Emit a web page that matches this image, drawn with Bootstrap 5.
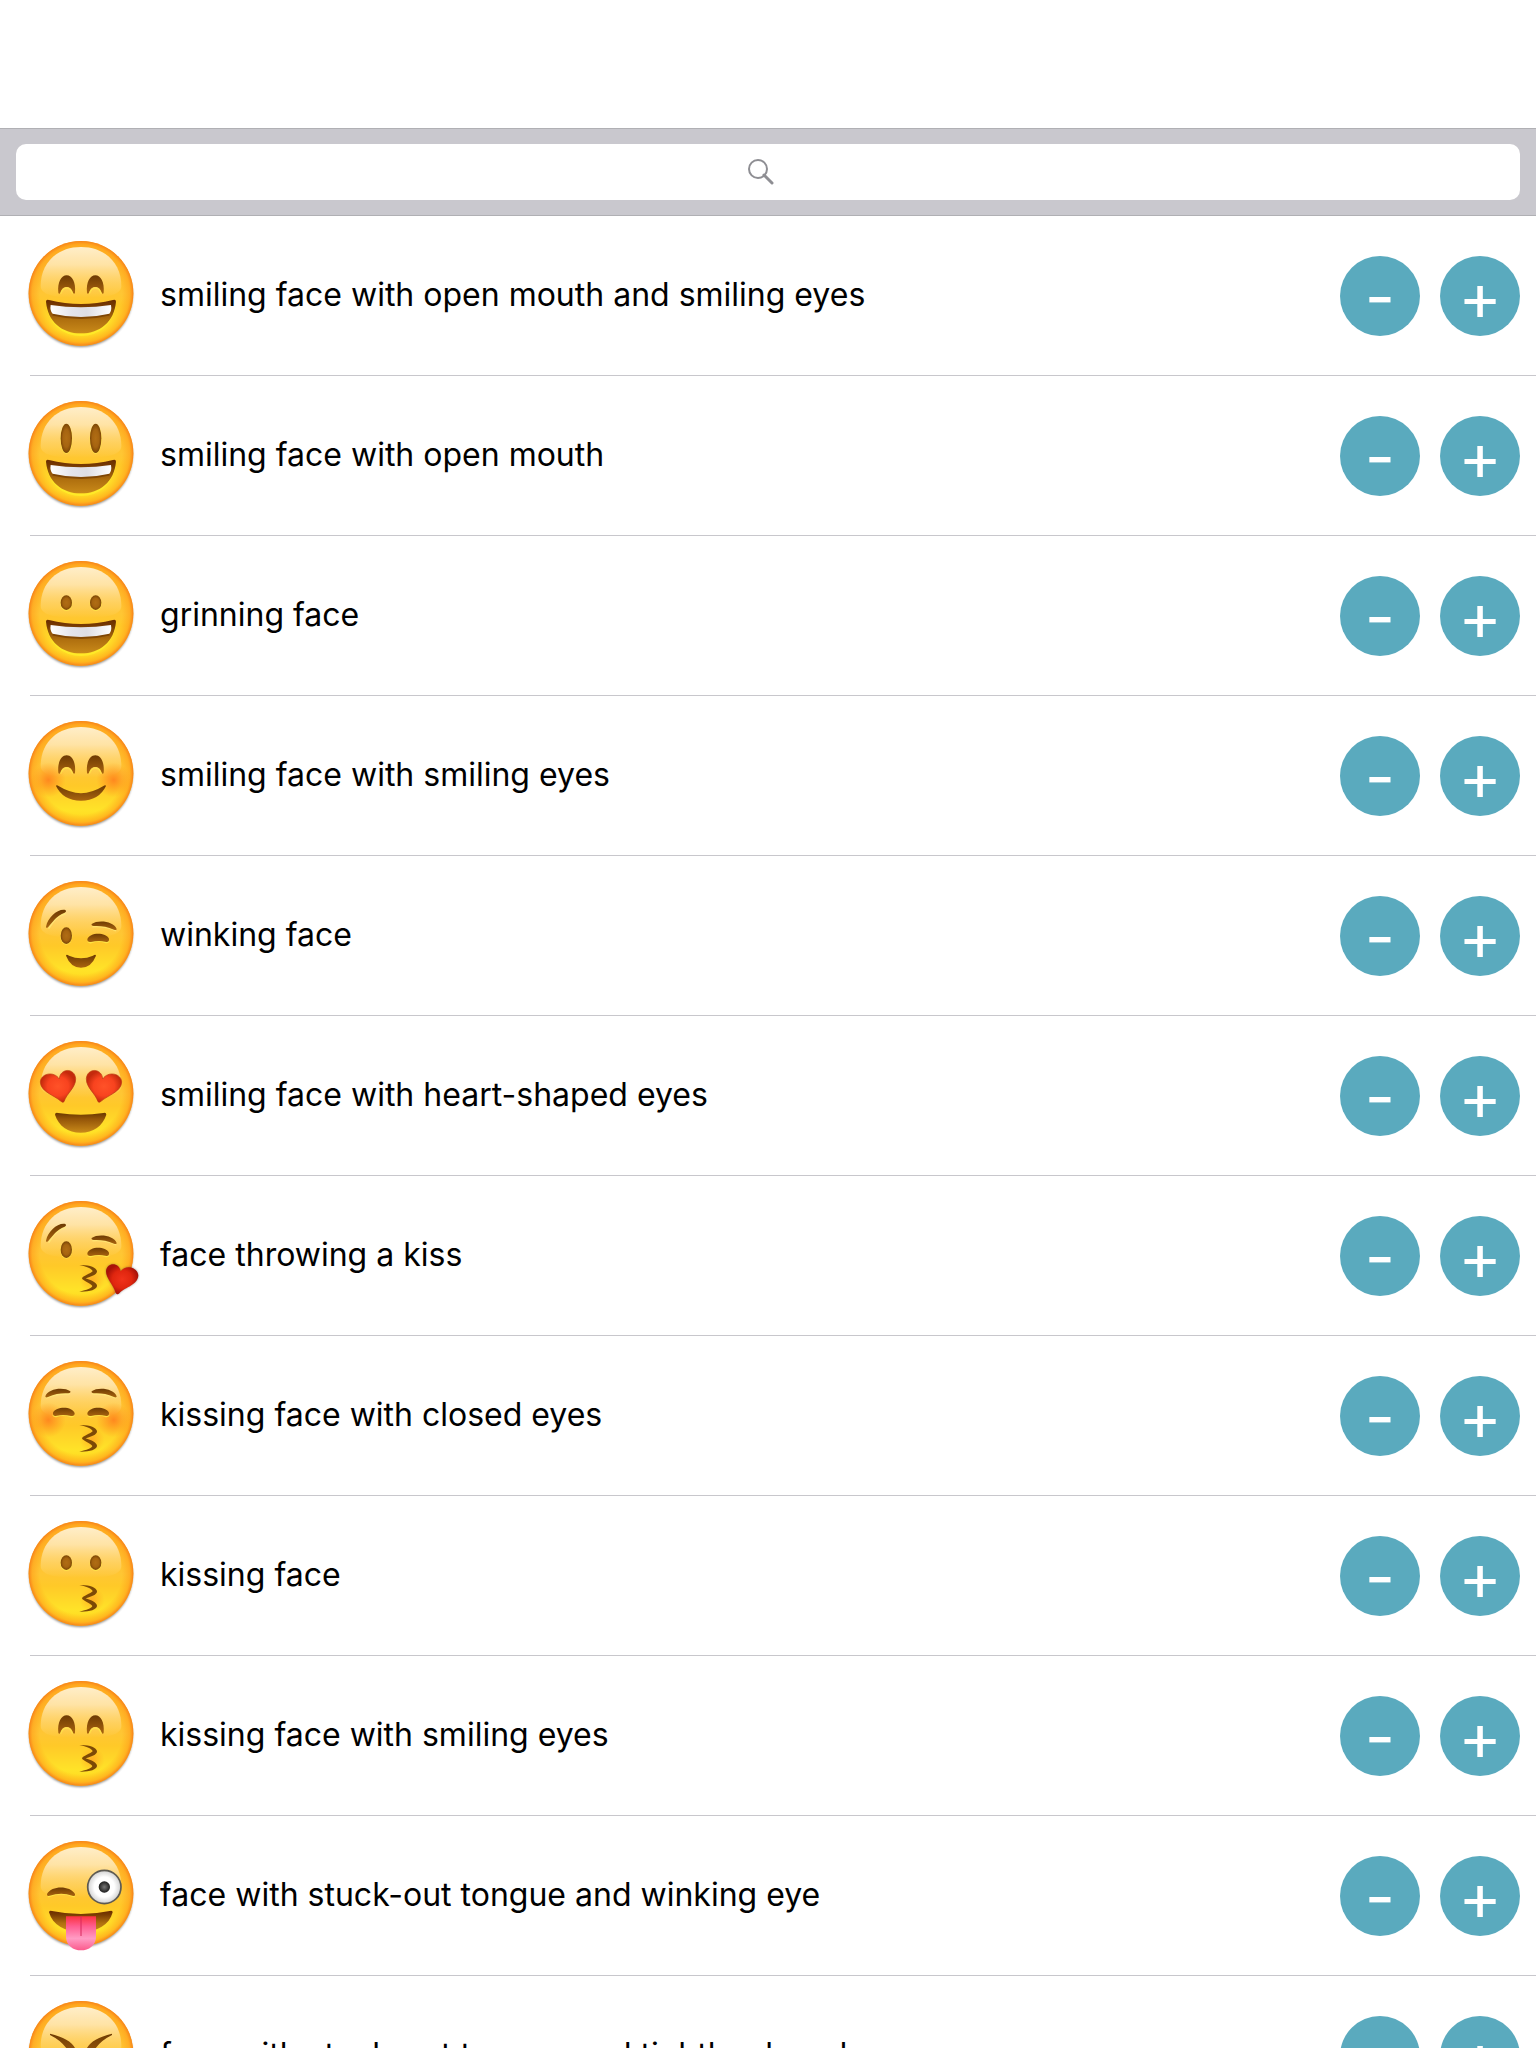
<!DOCTYPE html>
<html lang="en">
<head>
<meta charset="utf-8">
<meta name="viewport" content="width=device-width, initial-scale=1">
<title>Emoji list</title>
<link href="https://cdn.jsdelivr.net/npm/bootstrap@5.3.0/dist/css/bootstrap.min.css" rel="stylesheet">
<style>
  body { font-family: Inter, "Liberation Sans", sans-serif; color: #000; }
  .top-space { height: 128px; }
  .search-bar { background: #c9c8ce; border-top: 1px solid #b0b0b4; border-bottom: 1px solid #b0b0b4; padding: 15px 16px; }
  .search-bar .form-control { height: 56px; border: 0; border-radius: 10px; font-size: 28px; text-align: center; }
  .search-hint { padding-right: 14px; pointer-events: none; }
  .emoji-list { overflow-y: auto; scrollbar-width: none; }
  .emoji-list::-webkit-scrollbar { display: none; }
  .emoji-row { height: 160px; padding: 0 16px 0 20px; background: linear-gradient(#c8c7cc, #c8c7cc) 30px 100% / 100% 1px no-repeat; }
  .emoji-name { padding: 0 20px 2px; font-size: 32px; line-height: 40px; }
  .face { width: 120px; height: 120px; }
  .btn-pair { gap: 20px; }
  .round-btn { width: 80px; height: 80px; border: 0; background: #5aaabe; color: #fff; font-size: 66px; line-height: 80px; }
  .round-btn:hover, .round-btn:active { background: #4a99ad !important; color: #fff !important; }
</style>
<script src="https://cdn.jsdelivr.net/npm/bootstrap@5.3.0/dist/js/bootstrap.bundle.min.js"></script>
</head>
<body>

<!-- shared drawing parts for the faces -->
<svg width="0" height="0" class="position-absolute" aria-hidden="true">
  <defs>
    <linearGradient id="skin" x1="0" y1="0" x2="0" y2="1">
      <stop offset="0" stop-color="#ffb31f"/><stop offset=".5" stop-color="#ffc634"/><stop offset=".62" stop-color="#ffc928"/><stop offset=".85" stop-color="#ffe328"/><stop offset="1" stop-color="#ffd41c"/>
    </linearGradient>
    <radialGradient id="rim">
      <stop offset=".78" stop-color="#ffa41c" stop-opacity="0"/><stop offset=".93" stop-color="#ffa01c" stop-opacity=".6"/><stop offset="1" stop-color="#f7811a"/>
    </radialGradient>
    <linearGradient id="gloss" x1="0" y1="0" x2="0" y2="1">
      <stop offset="0" stop-color="#fff1d2" stop-opacity=".95"/><stop offset=".35" stop-color="#ffeabb" stop-opacity=".85"/><stop offset=".8" stop-color="#ffdc80" stop-opacity=".4"/><stop offset="1" stop-color="#ffd970" stop-opacity="0"/>
    </linearGradient>
    <linearGradient id="brown" x1="0" y1="0" x2="0" y2="1">
      <stop offset="0" stop-color="#6e3b03"/><stop offset="1" stop-color="#a9640f"/>
    </linearGradient>
    <radialGradient id="iris"><stop offset="0" stop-color="#b06d14"/><stop offset=".6" stop-color="#a66410"/><stop offset="1" stop-color="#7b4505"/></radialGradient>
    <linearGradient id="throat" x1="0" y1="0" x2="0" y2="1">
      <stop offset="0" stop-color="#6a2b00"/><stop offset=".2" stop-color="#7a3d02"/><stop offset=".6" stop-color="#b0700f"/><stop offset="1" stop-color="#c98a1a"/>
    </linearGradient>
    <linearGradient id="mouthful" x1="0" y1="0" x2="0" y2="1">
      <stop offset="0" stop-color="#6a3800"/><stop offset=".3" stop-color="#935408"/><stop offset="1" stop-color="#c98a1a"/>
    </linearGradient>
    <linearGradient id="teeth" x1="0" y1="0" x2="1" y2="0">
      <stop offset="0" stop-color="#fff"/><stop offset=".35" stop-color="#e4e4ea"/><stop offset=".6" stop-color="#dedee4"/><stop offset="1" stop-color="#fff"/>
    </linearGradient>
    <radialGradient id="blush"><stop offset="0" stop-color="#ff7d1c" stop-opacity=".85"/><stop offset="1" stop-color="#ff8d1c" stop-opacity="0"/></radialGradient>
    <radialGradient id="love"><stop offset="0" stop-color="#ff5228"/><stop offset=".6" stop-color="#f8431f"/><stop offset="1" stop-color="#c42a0c"/></radialGradient>
    <radialGradient id="love2"><stop offset="0" stop-color="#f0321a"/><stop offset=".6" stop-color="#e0260f"/><stop offset="1" stop-color="#a81208"/></radialGradient>
    <linearGradient id="tongue" x1="0" y1="0" x2="0" y2="1">
      <stop offset="0" stop-color="#fb3240"/><stop offset=".3" stop-color="#ff5f92"/><stop offset=".65" stop-color="#ff9cc4"/><stop offset="1" stop-color="#fb5a8c"/>
    </linearGradient>
    <radialGradient id="eyeball"><stop offset=".6" stop-color="#fff"/><stop offset=".9" stop-color="#dcdcdc"/><stop offset="1" stop-color="#aaa"/></radialGradient>
    <radialGradient id="pupil"><stop offset="0" stop-color="#777"/><stop offset="1" stop-color="#1e1e1e"/></radialGradient>
    <filter id="soft" x="-10%" y="-10%" width="120%" height="120%"><feGaussianBlur stdDeviation="3"/></filter>

    <g id="base">
      <circle cx="183" cy="178" r="155" fill="#55504c" opacity=".65" filter="url(#soft)"/>
      <circle cx="183" cy="172" r="157" fill="url(#skin)"/>
      <circle cx="183" cy="172" r="157" fill="url(#rim)"/>
      <path d="M62 150C62 80 112 33 183 33S304 80 304 150C304 180 250 186 183 186S62 180 62 150Z" fill="url(#gloss)"/>
    </g>
    <g id="arch"><path d="M115 170C112 138 124 118 140 118C156 118 168 138 165 170C164 174 161 174 159 170C154 158 149 153 140 153S126 158 121 170C119 174 116 174 115 170Z" fill="url(#brown)"/><path d="M122 173Q128 156 140 156T158 173" fill="none" stroke="#ffe84a" stroke-width="4" opacity=".7"/></g>
    <g id="arches"><use href="#arch"/><use href="#arch" x="86"/></g>
    <g id="dots"><ellipse cx="139" cy="142" rx="18" ry="23" fill="#ffe14a"/><ellipse cx="227" cy="142" rx="18" ry="23" fill="#ffe14a"/><ellipse cx="139" cy="140" rx="17" ry="22" fill="url(#iris)"/><ellipse cx="227" cy="140" rx="17" ry="22" fill="url(#iris)"/></g>
    <g id="grin">
      <path d="M80 198C86 262 130 297 183 297S280 262 286 198" fill="none" stroke="#ffef2a" stroke-width="6" opacity=".7"/>
      <path d="M78 197Q78 189 87 192Q183 216 279 192Q288 189 288 197C283 257 240 292 183 292C126 292 83 257 78 197Z" fill="url(#throat)"/>
      <path d="M98 235Q183 256 268 235" fill="none" stroke="#6a3500" stroke-width="7" opacity=".6"/>
      <path d="M92 207Q183 221 273 207Q276 224 268 233Q183 253 98 233Q89 224 92 207Z" fill="url(#teeth)"/>
    </g>
    <g id="cheeks"><circle cx="85" cy="192" r="52" fill="url(#blush)"/><circle cx="281" cy="192" r="52" fill="url(#blush)"/></g>
    <g id="wink"><path d="M204 196Q210 202 217 198Q235 192 254 198Q263 202 267 194" fill="none" stroke="#ffec4a" stroke-width="5" opacity=".8"/><path d="M202 190C208 168 258 168 267 188C268 198 262 199 256 197Q235 192 213 198Q202 200 202 190Z" fill="url(#brown)"/></g>
    <g id="brow"><path d="M217 152Q255 149 288 164" fill="none" stroke="#ffec7a" stroke-width="5" opacity=".7"/><path d="M215 144C235 130 282 136 290 159C290 163 286 163 282 161C260 151 242 149 221 150Q213 149 215 144Z" fill="url(#brown)"/></g>
    <g id="tilt"><path d="M86 158C100 134 112 118 137 113" fill="none" stroke="#ffec7a" stroke-width="5" opacity=".7"/><path d="M78 152C84 124 112 98 136 102Q141 107 134 110C110 118 98 138 84 154Q78 158 78 152Z" fill="url(#brown)"/></g>
    <g id="winkset"><use href="#tilt"/><use href="#brow"/><ellipse cx="139" cy="181" rx="18" ry="25" fill="#ffe14a"/><ellipse cx="139" cy="179" rx="17" ry="25" fill="url(#iris)"/><use href="#wink"/></g>
    <g id="kiss">
      <circle cx="216" cy="252" r="38" fill="url(#blush)" opacity=".55"/>
      <path d="M178 207C206 205 229 214 231 225C232 237 212 242 197 247C213 252 232 261 231 270C230 281 208 288 178 287C200 282 216 276 217 270C213 262 187 254 186 247C187 240 213 233 218 226C216 218 200 211 178 207Z" fill="#7d4a06"/>
    </g>
    <path id="heart" d="M132 197Q128 201 123 196C102 177 62 168 61 138C62 112 102 104 118 129C120 96 164 94 167 128C168 154 140 172 132 197Z" fill="url(#love)" stroke="#b93a10" stroke-width="2"/>
  </defs>

  <symbol id="f1" viewBox="0 0 360 360"><use href="#base"/><use href="#arches"/><use href="#grin"/></symbol>
  <symbol id="f2" viewBox="0 0 360 360"><use href="#base"/><ellipse cx="139" cy="129" rx="18" ry="45" fill="#ffe14a"/><ellipse cx="227" cy="129" rx="18" ry="45" fill="#ffe14a"/><ellipse cx="139" cy="127" rx="17" ry="44" fill="url(#iris)"/><ellipse cx="227" cy="127" rx="17" ry="44" fill="url(#iris)"/><use href="#grin"/></symbol>
  <symbol id="f3" viewBox="0 0 360 360"><use href="#base"/><use href="#dots"/><use href="#grin"/></symbol>
  <symbol id="f4" viewBox="0 0 360 360"><use href="#base"/><use href="#cheeks"/><use href="#arches"/><path d="M108 210Q109 205 117 211Q183 252 249 211Q257 205 258 210Q237 254 183 254T108 210Z" fill="url(#brown)"/></symbol>
  <symbol id="f5" viewBox="0 0 360 360"><use href="#base"/><use href="#winkset"/><path d="M138 239Q139 234 147 239Q183 254 219 239Q227 234 228 239Q214 275 183 275T138 239Z" fill="url(#brown)"/></symbol>
  <symbol id="f6" viewBox="0 0 360 360"><use href="#base"/><use href="#heart"/><use href="#heart" transform="matrix(-1 0 0 1 366 0)"/><path d="M105 236Q105 229 114 231Q183 242 250 231Q259 229 259 236C248 270 220 290 182 290S116 270 105 236Z" fill="url(#mouthful)"/></symbol>
  <symbol id="f7" viewBox="0 0 360 360"><use href="#base"/><use href="#winkset" y="-18"/><use href="#kiss"/><path d="M298 292Q291 298 287 290C280 266 258 248 258 226C260 198 298 198 302 226C316 206 352 212 355 238C354 268 316 272 298 292Z" fill="#403028" opacity=".5" filter="url(#soft)"/><path d="M298 292Q291 298 287 290C280 266 258 248 258 226C260 198 298 198 302 226C316 206 352 212 355 238C354 268 316 272 298 292Z" fill="url(#love2)"/></symbol>
  <symbol id="f8" viewBox="0 0 360 360"><use href="#base"/><use href="#cheeks"/><use href="#brow" y="-38"/><use href="#brow" transform="matrix(-1 0 0 1 366 -38)"/><use href="#wink" y="-18"/><use href="#wink" transform="matrix(-1 0 0 1 366 -18)"/><use href="#kiss"/></symbol>
  <symbol id="f9" viewBox="0 0 360 360"><use href="#base"/><use href="#dots"/><use href="#kiss"/></symbol>
  <symbol id="f10" viewBox="0 0 360 360"><use href="#base"/><use href="#arches"/><use href="#kiss"/></symbol>
  <symbol id="f11" viewBox="0 0 360 360"><use href="#base"/>
    <path d="M84 182Q124 164 164 182" fill="none" stroke="#ffec4a" stroke-width="5" opacity=".8"/>
    <path d="M81 174C95 148 150 148 165 174C166 181 161 181 157 179Q124 168 89 179Q80 182 81 174Z" fill="url(#brown)"/>
    <circle cx="253" cy="153" r="50" fill="url(#eyeball)" stroke="#5d5a52" stroke-width="5"/><circle cx="253" cy="153" r="17" fill="url(#pupil)"/>
    <path d="M87 229Q87 222 96 225Q183 243 269 225Q278 222 278 229C268 268 232 287 183 287S98 268 87 229Z" fill="url(#throat)"/>
    <path d="M138 241H228V302C228 328 206 343 183 343S138 328 138 302Z" fill="url(#tongue)"/><path d="M183 241V300" stroke="#d8285c" stroke-width="3"/></symbol>
  <symbol id="f12" viewBox="0 0 360 360"><use href="#base"/>
    <path id="squint" d="M90 113Q152 128 166 158Q150 184 98 194Q94 188 100 184Q130 174 140 158Q124 134 90 117Z" fill="url(#brown)"/><use href="#squint" transform="matrix(-1 0 0 1 366 0)"/>
    <path d="M87 229Q183 243 278 229C268 268 232 287 183 287S98 268 87 229Z" fill="url(#throat)"/><path d="M138 241H228V302C228 328 206 340 183 340S138 328 138 302Z" fill="url(#tongue)"/></symbol>
</svg>

<div class="d-flex flex-column vh-100 bg-white">
  <header class="flex-shrink-0">
    <div class="top-space"></div>
    <form class="search-bar" role="search">
      <div class="position-relative">
        <input type="search" class="form-control shadow-none" id="q" aria-label="Search">
        <label for="q" class="search-hint position-absolute top-0 start-0 w-100 h-100 d-flex align-items-center justify-content-center">
          <svg width="26" height="26" viewBox="0 0 26 26" fill="none" stroke="#8e8e93" aria-hidden="true"><circle cx="10" cy="10" r="9" stroke-width="2"/><path d="M16 16L24 24" stroke-width="3" stroke-linecap="round"/></svg>
        </label>
      </div>
    </form>
  </header>

  <ul class="emoji-list list-unstyled mb-0 flex-fill" id="list"></ul>
</div>

<script>
  const names = [
    "smiling face with open mouth and smiling eyes",
    "smiling face with open mouth",
    "grinning face",
    "smiling face with smiling eyes",
    "winking face",
    "smiling face with heart-shaped eyes",
    "face throwing a kiss",
    "kissing face with closed eyes",
    "kissing face",
    "kissing face with smiling eyes",
    "face with stuck-out tongue and winking eye",
    "face with stuck-out tongue and tightly-closed eyes"
  ];
  document.getElementById("list").innerHTML = names.map((name, i) => `
    <li class="emoji-row d-flex align-items-center">
      <svg class="face flex-shrink-0" aria-hidden="true"><use href="#f${i + 1}"/></svg>
      <span class="emoji-name flex-fill">${name}</span>
      <div class="btn-pair d-flex flex-shrink-0">
        <button type="button" class="round-btn btn rounded-circle p-0" aria-label="Remove ${name}">-</button>
        <button type="button" class="round-btn btn rounded-circle p-0" aria-label="Add ${name}">+</button>
      </div>
    </li>`).join("");
</script>
</body>
</html>
